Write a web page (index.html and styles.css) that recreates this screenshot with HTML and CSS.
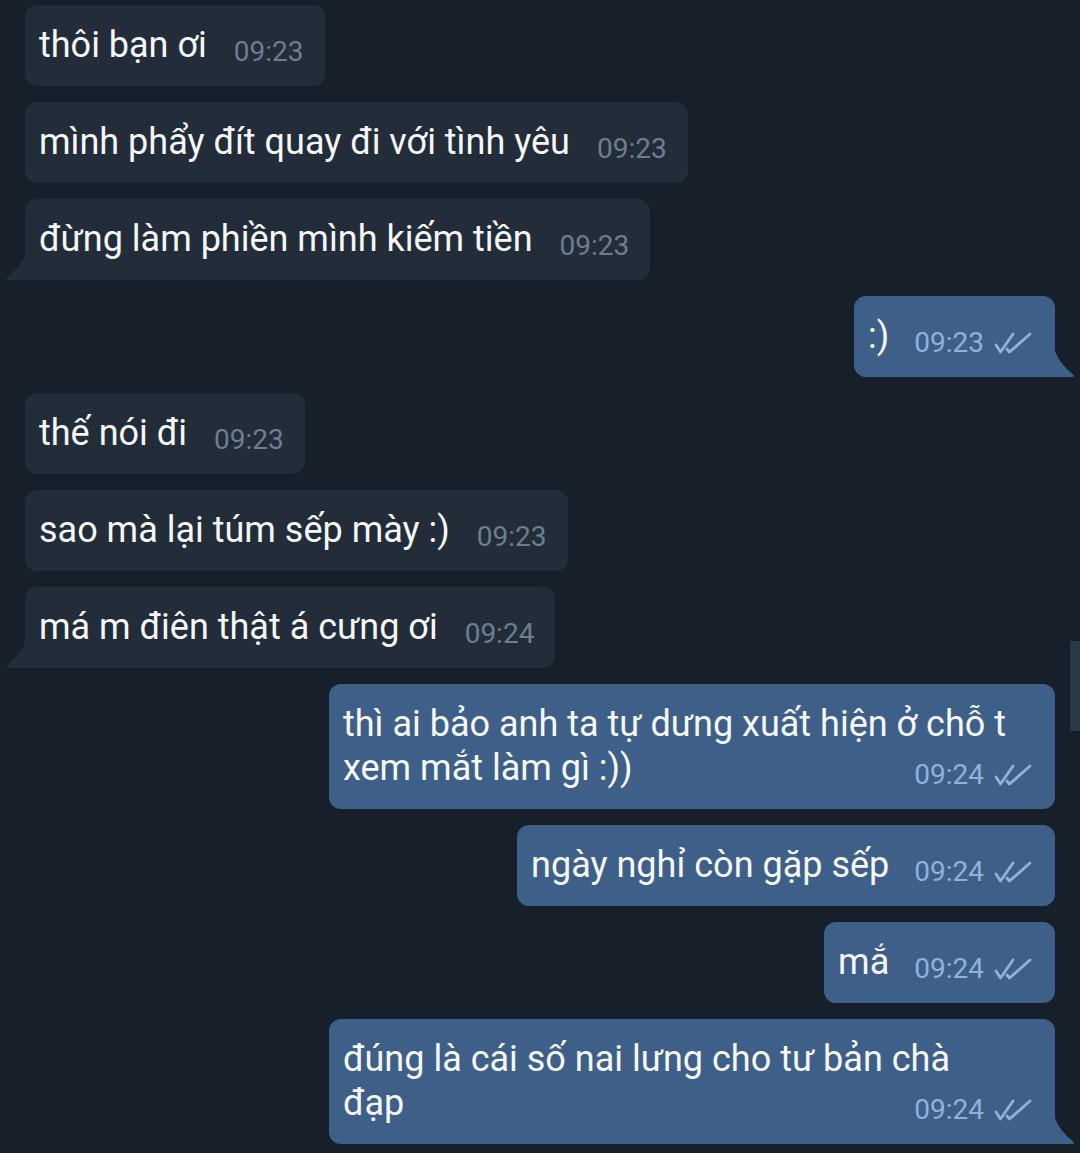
FILE: index.html
```html
<!DOCTYPE html>
<html lang="vi">
<head>
  <meta charset="UTF-8" />
  <meta name="viewport" content="width=device-width, initial-scale=1.0" />
  <title>Chat</title>
  <link rel="stylesheet" href="styles.css">
</head>
<body>
  <div class="chat">
    <div class="msg in">
      <div class="bubble"><span class="meta"><span class="time">09:23</span></span>thôi bạn ơi</div>
    </div>
    <div class="msg in">
      <div class="bubble"><span class="meta"><span class="time">09:23</span></span>mình phẩy đít quay đi với tình yêu</div>
    </div>
    <div class="msg in last">
      <div class="bubble"><span class="meta"><span class="time">09:23</span></span>đừng làm phiền mình kiếm tiền
        <svg class="tail" viewBox="0 0 22 26"><path d="M22 0 V26 H3 Q0 26 2 23.5 Q16 12 20 0 Z"/></svg>
      </div>
    </div>

    <div class="msg out last">
      <div class="bubble"><span class="meta"><span class="time">09:23</span><svg class="checks" viewBox="0 0 38 22"><path d="M2 13 L6.5 20 L19 2 M13 17 L15.5 20 L36 2"/></svg></span>:)
        <svg class="tail" viewBox="0 0 22 26"><path d="M0 0 V26 H19 Q22 26 20 23.5 Q6 12 2 0 Z"/></svg>
      </div>
    </div>

    <div class="msg in">
      <div class="bubble"><span class="meta"><span class="time">09:23</span></span>thế nói đi</div>
    </div>
    <div class="msg in">
      <div class="bubble"><span class="meta"><span class="time">09:23</span></span>sao mà lại túm sếp mày :)</div>
    </div>
    <div class="msg in last">
      <div class="bubble"><span class="meta"><span class="time">09:24</span></span>má m điên thật á cưng ơi
        <svg class="tail" viewBox="0 0 22 26"><path d="M22 0 V26 H3 Q0 26 2 23.5 Q16 12 20 0 Z"/></svg>
      </div>
    </div>

    <div class="msg out">
      <div class="bubble wide">thì ai bảo anh ta tự dưng xuất hiện ở chỗ t<br>xem mắt làm gì :))<span class="meta"><span class="time">09:24</span><svg class="checks" viewBox="0 0 38 22"><path d="M2 13 L6.5 20 L19 2 M13 17 L15.5 20 L36 2"/></svg></span></div>
    </div>
    <div class="msg out">
      <div class="bubble"><span class="meta"><span class="time">09:24</span><svg class="checks" viewBox="0 0 38 22"><path d="M2 13 L6.5 20 L19 2 M13 17 L15.5 20 L36 2"/></svg></span>ngày nghỉ còn gặp sếp</div>
    </div>
    <div class="msg out">
      <div class="bubble"><span class="meta"><span class="time">09:24</span><svg class="checks" viewBox="0 0 38 22"><path d="M2 13 L6.5 20 L19 2 M13 17 L15.5 20 L36 2"/></svg></span>mắ</div>
    </div>
    <div class="msg out last">
      <div class="bubble wide">đúng là cái số nai lưng cho tư bản chà<br>đạp<span class="meta"><span class="time">09:24</span><svg class="checks" viewBox="0 0 38 22"><path d="M2 13 L6.5 20 L19 2 M13 17 L15.5 20 L36 2"/></svg></span>
        <svg class="tail" viewBox="0 0 22 26"><path d="M0 0 V26 H19 Q22 26 20 23.5 Q6 12 2 0 Z"/></svg>
      </div>
    </div>
  </div>

  <div class="scrollbar"></div>
</body>
</html>
```

FILE: styles.css
```css
:root {
  --bg-color: #17202a;
  --in-bg: #222d39;
  --out-bg: #3e6088;
  --text-color: #f4f6f8;
  --in-time: #6c7e8f;
  --out-time: #8db3da;
  --scroll-color: #2b3848;
}

body {
  background-color: var(--bg-color);
  color: var(--text-color);
  font-family: Roboto, "Noto Sans", sans-serif;
  margin: 0;
  padding: 0;
  height: 1153px;
  overflow: hidden;
  position: relative;
}

.chat {
  display: flex;
  flex-direction: column;
  gap: 16px;
  padding: 5px 25px 0;
}

.msg {
  display: flex;
}

.msg.out {
  justify-content: flex-end;
}

.bubble {
  position: relative;
  font-size: 36px;
  line-height: 44px;
  padding: 18px 21px 19px 14px;
  border-radius: 12px;
  white-space: nowrap;
}

.msg.in .bubble {
  background-color: var(--in-bg);
}

.msg.out .bubble {
  background-color: var(--out-bg);
  padding-right: 23px;
}

.bubble.wide {
  width: 689px;
}

.msg.in.last .bubble {
  border-bottom-left-radius: 0;
}

.msg.out.last .bubble {
  border-bottom-right-radius: 0;
}

.meta {
  float: right;
  margin-left: 27px;
  position: relative;
  top: 7px;
  display: flex;
  align-items: center;
  gap: 10px;
  height: 44px;
}

.msg.out .meta {
  margin-left: 25px;
}

.time {
  font-size: 28px;
  color: var(--in-time);
}

.msg.out .time {
  color: var(--out-time);
}

.checks {
  width: 38px;
  height: 22px;
  fill: none;
  stroke: var(--out-time);
  stroke-width: 2.8;
  stroke-linecap: round;
  stroke-linejoin: round;
}

.tail {
  position: absolute;
  bottom: 0;
  width: 22px;
  height: 26px;
}

.msg.in .tail {
  left: -20px;
  fill: var(--in-bg);
}

.msg.out .tail {
  right: -20px;
  fill: var(--out-bg);
}

.scrollbar {
  position: absolute;
  top: 641px;
  right: 0;
  width: 10px;
  height: 90px;
  background-color: var(--scroll-color);
}
```
